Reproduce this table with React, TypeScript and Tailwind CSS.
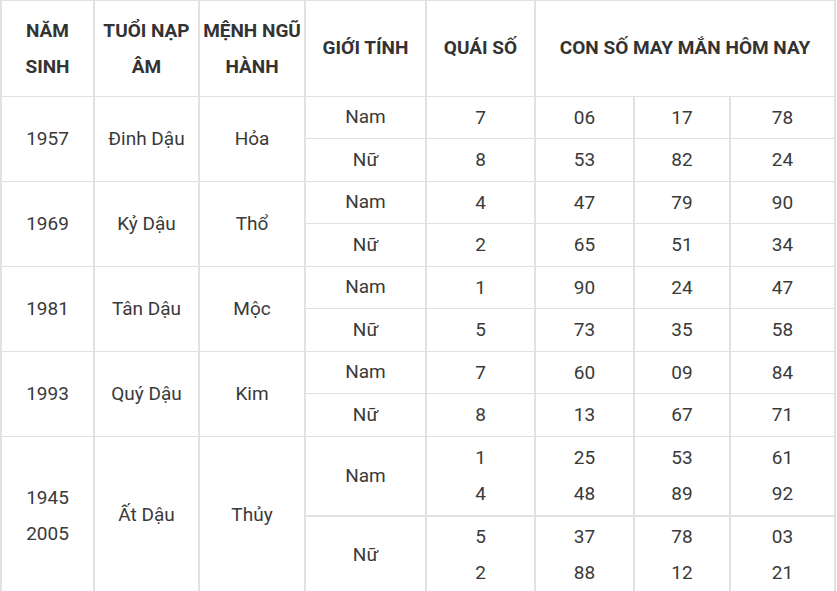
const groups = [
  {
    year: ["1957"],
    tuoi: "Đinh Dậu",
    menh: "Hỏa",
    rows: [
      { gt: "Nam", qs: ["7"], nums: [["06"], ["17"], ["78"]] },
      { gt: "Nữ", qs: ["8"], nums: [["53"], ["82"], ["24"]] },
    ],
  },
  {
    year: ["1969"],
    tuoi: "Kỷ Dậu",
    menh: "Thổ",
    rows: [
      { gt: "Nam", qs: ["4"], nums: [["47"], ["79"], ["90"]] },
      { gt: "Nữ", qs: ["2"], nums: [["65"], ["51"], ["34"]] },
    ],
  },
  {
    year: ["1981"],
    tuoi: "Tân Dậu",
    menh: "Mộc",
    rows: [
      { gt: "Nam", qs: ["1"], nums: [["90"], ["24"], ["47"]] },
      { gt: "Nữ", qs: ["5"], nums: [["73"], ["35"], ["58"]] },
    ],
  },
  {
    year: ["1993"],
    tuoi: "Quý Dậu",
    menh: "Kim",
    rows: [
      { gt: "Nam", qs: ["7"], nums: [["60"], ["09"], ["84"]] },
      { gt: "Nữ", qs: ["8"], nums: [["13"], ["67"], ["71"]] },
    ],
  },
  {
    year: ["1945", "2005"],
    tuoi: "Ất Dậu",
    menh: "Thủy",
    rows: [
      { gt: "Nam", qs: ["1", "4"], nums: [["25", "48"], ["53", "89"], ["61", "92"]] },
      { gt: "Nữ", qs: ["5", "2"], nums: [["37", "88"], ["78", "12"], ["03", "21"]] },
    ],
  },
]

const cell = "border-x-2 border-y border-[#e1e1e1] text-center align-middle p-0"

function Lines({ items }: { items: string[] }) {
  return (
    <>
      {items.map((t, i) => (
        <div key={i} className="leading-[36px]">
          {t}
        </div>
      ))}
    </>
  )
}

export default function App() {
  return (
    <div className="w-[837px] h-[591px] overflow-hidden bg-white font-['Roboto',sans-serif] text-[19px]">
      <table className="table-fixed border-collapse w-[834px]">
        <colgroup>
          <col className="w-[93px]" />
          <col className="w-[105px]" />
          <col className="w-[106px]" />
          <col className="w-[121px]" />
          <col className="w-[109px]" />
          <col className="w-[99px]" />
          <col className="w-[96px]" />
          <col className="w-[105px]" />
        </colgroup>
        <thead>
          <tr className="h-[96px] font-bold text-[#333]">
            <th className={cell + " leading-[36px]"}>
              NĂM<br />SINH
            </th>
            <th className={cell + " leading-[36px]"}>
              TUỔI NẠP<br />ÂM
            </th>
            <th className={cell + " leading-[36px]"}>
              MỆNH NGŨ<br />HÀNH
            </th>
            <th className={cell}>GIỚI TÍNH</th>
            <th className={cell}>QUÁI SỐ</th>
            <th className={cell} colSpan={3}>
              CON SỐ MAY MẮN HÔM NAY
            </th>
          </tr>
        </thead>
        <tbody className="text-[#3a3a3a]">
          {groups.map((g, gi) => {
            const last = gi === groups.length - 1
            return g.rows.map((r, ri) => (
              <tr
                key={gi + "-" + ri}
                className={last ? "h-[79px]" : ri === 0 ? "h-[42px]" : "h-[43px]"}
              >
                {ri === 0 && (
                  <>
                    <td className={cell} rowSpan={2}>
                      <Lines items={g.year} />
                    </td>
                    <td className={cell} rowSpan={2}>
                      {g.tuoi}
                    </td>
                    <td className={cell} rowSpan={2}>
                      {g.menh}
                    </td>
                  </>
                )}
                <td className={cell + (last && ri === 1 ? " border-t-2" : "")}>{r.gt}</td>
                <td className={cell + (last && ri === 1 ? " border-t-2" : "")}>
                  <Lines items={r.qs} />
                </td>
                {r.nums.map((n, ni) => (
                  <td key={ni} className={cell + (last && ri === 1 ? " border-t-2" : "")}>
                    <Lines items={n} />
                  </td>
                ))}
              </tr>
            ))
          })}
        </tbody>
      </table>
    </div>
  )
}
